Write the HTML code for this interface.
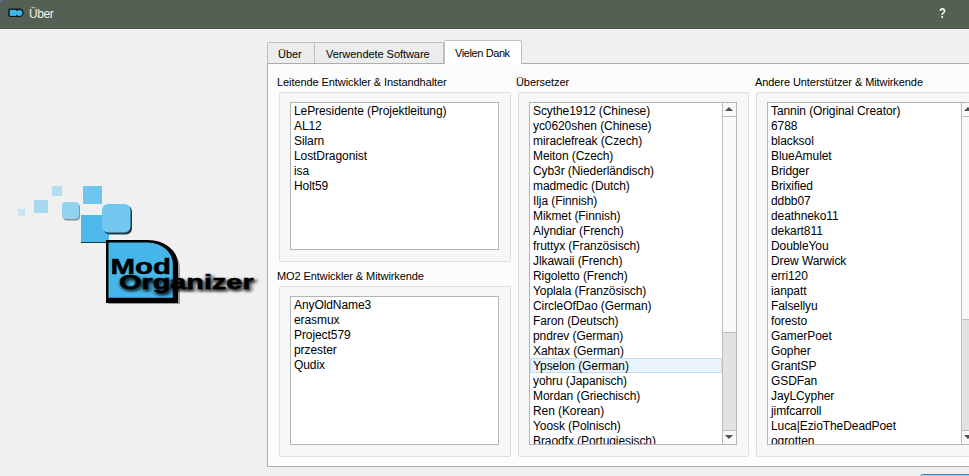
<!DOCTYPE html>
<html><head><meta charset="utf-8">
<style>
*{margin:0;padding:0;box-sizing:border-box}
html,body{width:969px;height:476px;overflow:hidden;background:#f0f0f0;font-family:"Liberation Sans",sans-serif;color:#000}
.abs{position:absolute}
#title{left:0;top:0;width:969px;height:29px;background:#546054;border-bottom:1px solid #475047}
#title .t{left:29px;top:7px;font-size:12px;line-height:15px;color:#f6f2e8;letter-spacing:-0.4px}
#title .q{left:939px;top:5px;font-size:14.5px;line-height:17px;color:#f4f4f0;font-weight:bold;transform:scaleX(0.78);transform-origin:0 0}
#tline{left:0;top:29px;width:969px;height:1px;background:#fafafa}
.tab{position:absolute;top:42px;height:21px;border:1px solid #bfbfbf;border-bottom:none;background:#ececec;border-radius:2px 2px 0 0}
.tab.sel{top:40px;height:24px;background:#fff;z-index:2}
.tab span{position:absolute;top:4px;font-size:11px;line-height:15px;white-space:nowrap;letter-spacing:-0.05px}
#pane{left:267px;top:63px;width:740px;height:404px;border:1px solid #acacac;background:#fcfcfc;box-shadow:inset 1px 1px 0 #fff,inset -1px -1px 0 #fff}
.lbl{position:absolute;font-size:11px;line-height:15px;white-space:nowrap;letter-spacing:-0.08px}
.grp{position:absolute;border:1px solid #dedede;border-radius:2px;background:#f7f7f7}
.list{position:absolute;border:1px solid #b4b4b4;background:#fff;overflow:hidden}
.list .rows{position:absolute;left:0;top:0;right:0}
.list .rows div{position:relative;font-size:12px;line-height:17px;height:15px;white-space:nowrap;padding-left:3px;letter-spacing:-0.08px}
.list .rows div.sel{background:#e9f4fc;box-shadow:inset 0 0 0 1px #c6ddf0;margin-right:0}
.sb{position:absolute;right:0;top:0;bottom:0;width:14px;border-left:1px solid #bdbdbd;background:#f9f9f9}
.sb .up,.sb .dn{position:absolute;left:0;width:13px;height:14px;background:#f9f9f9}
.sb .up{top:0;border-bottom:1px solid #bdbdbd}
.sb .up svg{position:absolute;left:2px;top:4px}
.sb .dn{border-top:1px solid #bdbdbd}
.sb .dn svg{position:absolute;left:2px;top:4px}
.sb .thumb{position:absolute;left:0;width:13px;background:#e2e2e2;border-top:1px solid #bdbdbd;border-bottom:1px solid #bdbdbd}
</style></head><body>
<div id="title" class="abs">
  <svg class="abs" style="left:0;top:0" width="30" height="28" viewBox="0 0 30 28">
    <rect x="8.2" y="8.6" width="10.5" height="8.3" rx="1.8" fill="#0b1418"/>
    <circle cx="19.5" cy="12.75" r="4.2" fill="#0b1418"/>
    <rect x="9.7" y="9.9" width="7.2" height="6.0" fill="#3cb6ea"/>
    <circle cx="19.4" cy="12.9" r="3.0" fill="#3cb6ea"/>
    <path d="M15.9 9.6 L16.7 11 L17.5 9.6 Z M15.9 16.2 L16.7 14.8 L17.5 16.2 Z" fill="#0b1418"/>
  </svg>
  <div class="abs t">Über</div>
  <div class="abs q">?</div>
</div>
<div id="tline" class="abs"></div>
<div class="abs" style="left:0;top:0;width:4px;height:4px;background:radial-gradient(circle at 0 0,#9a70c8 0,rgba(140,100,180,0.6) 1.5px,rgba(84,96,84,0) 3.5px)"></div>

<svg class="abs" style="left:0;top:180px" width="265" height="130" viewBox="0 180 265 130">
  <defs>
    <filter id="sh" x="-20%" y="-40%" width="140%" height="180%"><feGaussianBlur stdDeviation="1.3"/></filter>
    <filter id="sh2" x="-30%" y="-30%" width="160%" height="160%"><feGaussianBlur stdDeviation="0.7"/></filter>
  </defs>
  <rect x="18" y="209" width="7" height="7" fill="#c9e5f2"/>
  <rect x="34" y="200" width="14" height="13" fill="#a6d9f0"/>
  <rect x="52" y="186" width="10" height="10" fill="#b3def2"/>
  <rect x="83" y="186" width="19" height="18" fill="#6ec6ee"/>
  <rect x="63" y="203.5" width="17" height="17" rx="4" fill="#3a5a6a" opacity="0.6" filter="url(#sh2)"/>
  <rect x="62" y="202" width="17" height="17" rx="4" fill="#92d2ef"/>
  <rect x="81" y="215" width="28" height="28" fill="#1a3a4a"/>
  <rect x="81" y="215" width="28" height="27" fill="#4cb9ea"/>
  <rect x="103.5" y="205.5" width="28.5" height="29" rx="6" fill="#1a3a4a" filter="url(#sh2)"/>
  <rect x="102" y="204" width="28.5" height="28.5" rx="6" fill="#72c7ee"/>
  <path d="M108 244 H150 A30 24 0 0 1 180 268 V304 H108 Z" fill="#000" opacity="0.35" filter="url(#sh2)"/>
  <path d="M106 240 H148 A30 24 0 0 1 178 264 V303 H106 Z" fill="#000"/>
  <path d="M108.5 242.5 H148 A24.8 21.5 0 0 1 172.8 264 V297.8 H108.5 Z" fill="#46b6ea"/>
  <text x="0" y="274" font-family="Liberation Sans" font-weight="bold" font-size="22" transform="translate(110.5 0) scale(1.34 1)" fill="#000" stroke="#000" stroke-width="0.5">Mod</text>
  <text x="0" y="291" font-family="Liberation Sans" font-weight="bold" font-size="19.5" transform="translate(120.5 0) scale(1.48 1)" fill="#000" stroke="#000" stroke-width="1.6" opacity="0.75" filter="url(#sh)">Organizer</text>
  <text x="0" y="289.5" font-family="Liberation Sans" font-weight="bold" font-size="19.5" transform="translate(119 0) scale(1.48 1)" fill="#000" stroke="#000" stroke-width="0.5">Organizer</text>
</svg>

<div id="pane" class="abs"></div>
<div class="tab" style="left:267px;width:48px"><span style="left:10px">Über</span></div>
<div class="tab" style="left:314px;width:130px"><span style="left:11px">Verwendete Software</span></div>
<div class="tab sel" style="left:444px;width:78px"><span style="left:10px;top:5px;letter-spacing:-0.4px">Vielen Dank</span></div>

<div class="lbl" style="left:277px;top:75px">Leitende Entwickler &amp; Instandhalter</div>
<div class="grp" style="left:279px;top:92px;width:232px;height:170px"></div>
<div class="list" style="left:290px;top:102px;width:209px;height:148px"><div class="rows"><div>LePresidente (Projektleitung)</div><div>AL12</div><div>Silarn</div><div>LostDragonist</div><div>isa</div><div>Holt59</div></div></div>
<div class="lbl" style="left:277px;top:269px">MO2 Entwickler &amp; Mitwirkende</div>
<div class="grp" style="left:279px;top:286px;width:232px;height:171px"></div>
<div class="list" style="left:290px;top:296px;width:209px;height:149px"><div class="rows"><div>AnyOldName3</div><div>erasmux</div><div>Project579</div><div>przester</div><div>Qudix</div></div></div>

<div class="lbl" style="left:516px;top:75px">Übersetzer</div>
<div class="grp" style="left:518px;top:92px;width:231px;height:365px"></div>
<div class="list" style="left:529px;top:102px;width:208px;height:343px"><div class="rows" style="right:14px"><div>Scythe1912 (Chinese)</div><div>yc0620shen (Chinese)</div><div>miraclefreak (Czech)</div><div>Meiton (Czech)</div><div>Cyb3r (Niederländisch)</div><div>madmedic (Dutch)</div><div>Ilja (Finnish)</div><div>Mikmet (Finnish)</div><div>Alyndiar (French)</div><div>fruttyx (Französisch)</div><div>Jlkawaii (French)</div><div>Rigoletto (French)</div><div>Yoplala (Französisch)</div><div>CircleOfDao (German)</div><div>Faron (Deutsch)</div><div>pndrev (German)</div><div>Xahtax (German)</div><div class="sel">Ypselon (German)</div><div>yohru (Japanisch)</div><div>Mordan (Griechisch)</div><div>Ren (Korean)</div><div>Yoosk (Polnisch)</div><div>Braodfx (Portugiesisch)</div></div><div class="sb">
<div class="up"><svg width="9" height="5" viewBox="0 0 9 5"><path d="M0 4 L4 0 L8 4 Z" fill="#505050"/></svg></div>
<div class="thumb" style="top:229px;height:99px"></div>
<div class="dn" style="top:327px;height:15px"><svg width="9" height="5" viewBox="0 0 9 5"><path d="M0 0 L4 4 L8 0 Z" fill="#505050"/></svg></div>
</div></div>

<div class="lbl" style="left:755px;top:75px">Andere Unterstützer &amp; Mitwirkende</div>
<div class="grp" style="left:756px;top:92px;width:231px;height:365px"></div>
<div class="list" style="left:767px;top:102px;width:209px;height:343px"><div class="rows" style="right:14px"><div>Tannin (Original Creator)</div><div>6788</div><div>blacksol</div><div>BlueAmulet</div><div>Bridger</div><div>Brixified</div><div>ddbb07</div><div>deathneko11</div><div>dekart811</div><div>DoubleYou</div><div>Drew Warwick</div><div>erri120</div><div>ianpatt</div><div>Falsellyu</div><div>foresto</div><div>GamerPoet</div><div>Gopher</div><div>GrantSP</div><div>GSDFan</div><div>JayLCypher</div><div>jimfcarroll</div><div>Luca|EzioTheDeadPoet</div><div>ogrotten</div></div><div class="sb">
<div class="up"><svg width="9" height="5" viewBox="0 0 9 5"><path d="M0 4 L4 0 L8 4 Z" fill="#505050"/></svg></div>
<div class="thumb" style="top:216px;height:112px"></div>
<div class="dn" style="top:327px;height:15px"><svg width="9" height="5" viewBox="0 0 9 5"><path d="M0 0 L4 4 L8 0 Z" fill="#505050"/></svg></div>
</div></div>
<div class="abs" style="left:920px;top:474px;width:80px;height:22px;border:1px solid #3c7fb1;border-radius:3px;background:#def1fc;box-shadow:inset 0 0 0 1px #a8d8f4"></div>
</body></html>
